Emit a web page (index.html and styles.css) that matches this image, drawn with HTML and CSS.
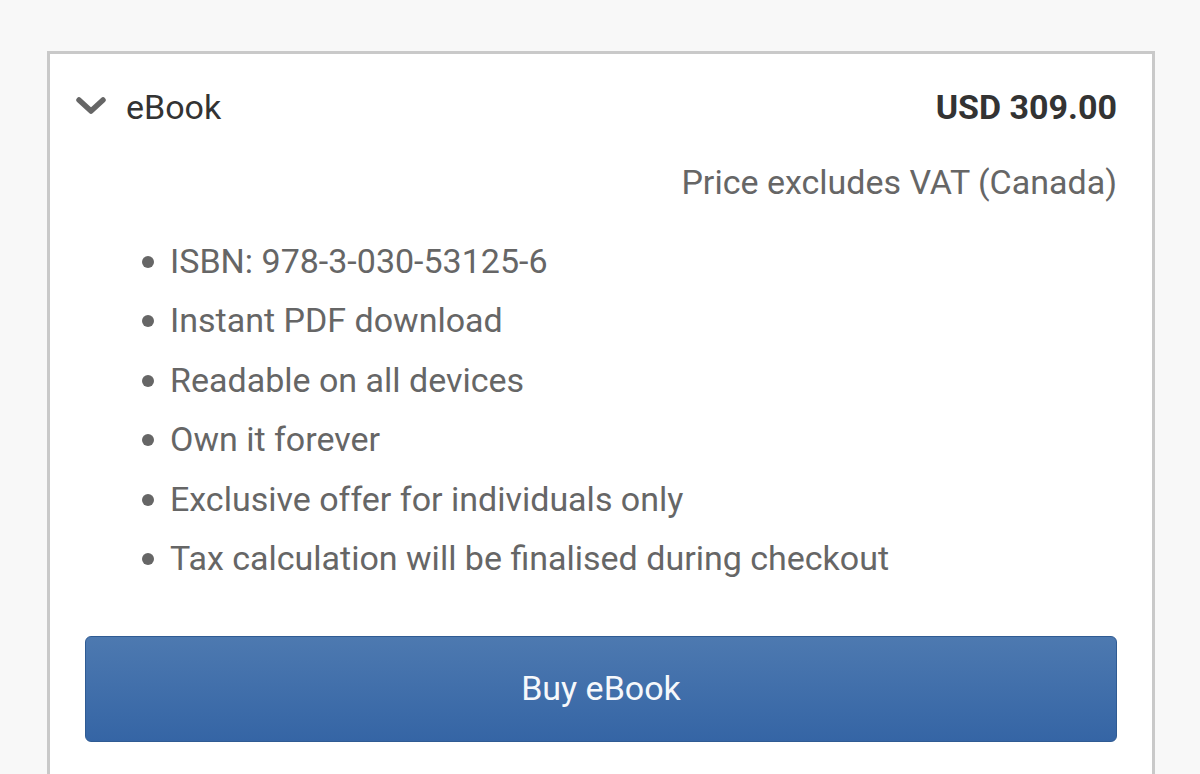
FILE: index.html
```html
<!DOCTYPE html>
<html>
<head>
<meta charset="utf-8">
<link rel="stylesheet" href="styles.css">
</head>
<body>
<div class="card">
  <div class="header">
    <div class="title">
      <svg class="chev" width="30" height="18" viewBox="0 0 30 18"><path d="M3 3 L15 14 L27 3" fill="none" stroke="#666" stroke-width="5.5" stroke-linecap="round" stroke-linejoin="round"/></svg>
      <span>eBook</span>
    </div>
    <div class="price">USD 309.00</div>
  </div>
  <div class="vat">Price excludes VAT (Canada)</div>
  <ul class="features">
    <li>ISBN: 978-3-030-53125-6</li>
    <li>Instant PDF download</li>
    <li>Readable on all devices</li>
    <li>Own it forever</li>
    <li>Exclusive offer for individuals only</li>
    <li>Tax calculation will be finalised during checkout</li>
  </ul>
  <button class="buy">Buy eBook</button>
</div>
</body>
</html>
```
FILE: styles.css
```css
html, body {
  margin: 0;
  padding: 0;
  background: #f8f8f8;
  font-family: Roboto, "Liberation Sans", sans-serif;
  height: 774px;
  overflow: hidden;
}
.card {
  margin: 51px 0 0 47px;
  height: 687px;
  border: 3px solid #c9c9c9;
  border-bottom: none;
  background: #fff;
  padding: 33px 35px 0 35px;
  box-sizing: content-box;
  width: 1032px;
}
.header {
  display: flex;
  justify-content: space-between;
  align-items: center;
  height: 40px;
  line-height: 40px;
}
.title {
  display: flex;
  align-items: center;
  margin-left: -9px;
  font-size: 34px;
  color: #333;
}
.chev {
  display: block;
  margin-right: 20px;
  margin-top: -2px;
}
.price {
  font-size: 34px;
  font-weight: 700;
  color: #333;
}
.vat {
  margin-top: 35px;
  text-align: right;
  font-size: 34px;
  line-height: 40px;
  color: #666;
}
.features {
  list-style: none;
  margin: 30px 0 0 0;
  padding: 0;
}
.features li {
  position: relative;
  padding-left: 85px;
  font-size: 34px;
  line-height: 59.4px;
  color: #666;
}
.features li::before {
  content: "";
  position: absolute;
  left: 57px;
  top: 24px;
  width: 12px;
  height: 12px;
  border-radius: 50%;
  background: #666;
}
.buy {
  display: block;
  margin-top: 48px;
  width: 1032px;
  height: 106px;
  border: 1px solid #2f5b93;
  border-radius: 6px;
  background: linear-gradient(#4d79b0, #3565a5);
  color: #f6f8fb;
  font-family: Roboto, "Liberation Sans", sans-serif;
  font-size: 34px;
  padding: 0 0 3px 0;
}
```
